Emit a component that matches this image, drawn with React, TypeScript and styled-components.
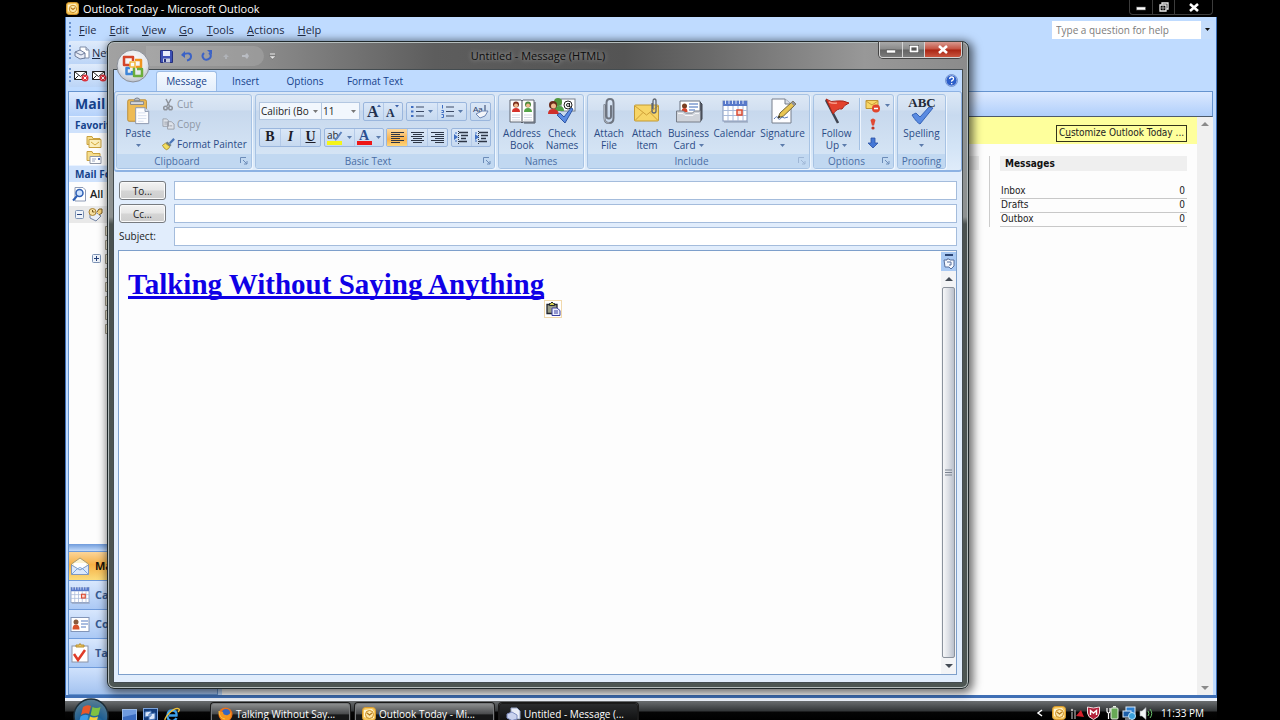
import React from 'react';
import styled, { createGlobalStyle, css } from 'styled-components';

const ui = '"Open Sans", "Noto Sans", sans-serif';
const tahoma = '"DejaVu Sans Condensed", "DejaVu Sans", sans-serif';

const Global = createGlobalStyle`
  * { box-sizing: border-box; }
  body { margin: 0; background: #000; font-family: ${ui}; font-size: 11px; line-height: 14px; color: #1e2b45; }
  button, input, select { font: inherit; color: inherit; margin: 0; padding: 0; }
  button { background: none; border: 0; white-space: nowrap; cursor: pointer; }
  svg { display: block; flex: none; }
  u { text-underline-offset: 1px; }
`;

/* ---------- desktop ---------- */
const Desktop = styled.div`
  position: relative;
  display: flex;
  flex-direction: column;
  height: 100vh;
  min-height: 480px;
  margin: 0 calc(5% - 1px) 0 calc(5% + 1px);
  overflow: hidden;
`;

const AppTitle = styled.header`
  display: flex;
  align-items: center;
  gap: 4px;
  height: 17px;
  padding-left: 1px;
  color: #fff;
  background: #000;
  h1 { margin: 0; flex: 1; font-size: 11px; font-weight: 400; }
`;

const AppButtons = styled.div`
  display: flex;
  height: 15px;
  align-self: flex-start;
  margin-right: 4px;
  border: 1px solid #3c3c3c;
  border-top: 0;
  border-radius: 0 0 4px 4px;
`;

const AppButton = styled.button<{ $wide?: boolean }>`
  display: grid;
  place-items: center;
  width: ${p => (p.$wide ? 38 : 22)}px;
  & + & { border-left: 1px solid #3c3c3c; }
`;

const AppFrame = styled.div`
  flex: 1;
  display: flex;
  flex-direction: column;
  min-height: 0;
  padding: 1px 3px 0 2px;
  background: #bfdbff;
  border: solid #3f6fb5;
  border-width: 0 1px 3px 1px;
`;

const Bar = styled.div`
  display: flex;
  align-items: center;
  height: 23px;
  gap: 4px;
`;

const Grip = styled.i`
  width: 2px;
  height: 15px;
  margin: 0 1px;
  background: repeating-linear-gradient(#6a93d0 0 2px, transparent 2px 4px);
`;

const Menu = styled.nav`
  display: flex;
  flex: 1;
  gap: 13px;
  padding-left: 3px;
`;

const HelpBox = styled.div`
  display: flex;
  height: 18px;
  input {
    width: 149px;
    padding: 0 4px;
    border: 0;
    font-size: 10px;
    background: #fff;
    &::placeholder { color: #7c7c7c; opacity: 1; }
  }
  button { width: 12px; display: grid; place-items: center; background: #c4dcfb; }
`;

const ToolStrip = styled(Bar)`
  gap: 2px;
  width: 40%;
  background: linear-gradient(#dfebfb, #bcd5f7);
  border-radius: 3px;
`;

const Panes = styled.div`
  flex: 1;
  display: flex;
  gap: 4px;
  min-height: 0;
  margin-top: 4px;
`;

/* ---------- navigation pane ---------- */
const NavPane = styled.aside`
  display: flex;
  flex-direction: column;
  width: 150px;
  border: 1px solid #6593cf;
  background: #fdfdfd;
  overflow: hidden;
  white-space: nowrap;
`;

const NavTitle = styled.h2`
  margin: 0;
  padding: 0 6px;
  font-size: 14px;
  line-height: 24px;
  color: #15428b;
  background: linear-gradient(#dfebff, #b5d2fb);
`;

const NavHead = styled.h3`
  margin: 0;
  padding: 0 6px;
  font-size: 10px;
  line-height: 16px;
  color: #15428b;
  background: #cfe2fc;
  border-top: 1px solid #e9f2ff;
`;

const NavRow = styled.div<{ $indent: number; $tone?: string; $h: number }>`
  display: flex;
  align-items: center;
  gap: 4px;
  height: ${p => p.$h}px;
  padding-left: ${p => p.$indent}px;
  font-weight: 600;
  color: #222;
  background: ${p => p.$tone || 'transparent'};
`;

const NavGrow = styled.div`
  flex: 1;
  min-height: 0;
  overflow: hidden;
`;

const TreeRow = styled.div`
  display: flex;
  justify-content: flex-end;
  align-items: center;
  gap: 4px;
  width: 50px;
  height: 14px;
`;

const NavButton = styled.button<{ $active?: boolean }>`
  display: flex;
  align-items: center;
  gap: 5px;
  height: 29px;
  padding-left: 1px;
  font-weight: 700;
  text-align: left;
  border-top: 1px solid #6f9bdb;
  color: ${p => (p.$active ? '#1a1208' : '#38598f')};
  background: ${p => (p.$active
    ? 'linear-gradient(#fbd59a, #f5b046 45%, #fbdc7c)'
    : 'linear-gradient(#d8e7fd, #abc9f5)')};
`;

const NavSplit = styled.div`
  height: 7px;
  background: linear-gradient(#6f9bdb, #c3dbfb);
`;

const NavFoot = styled.div`
  height: 27px;
  border-top: 1px solid #6f9bdb;
  background: linear-gradient(#cfe1fc, #a4c3f0);
`;

/* ---------- Outlook Today page ---------- */
const Today = styled.main`
  flex: 1;
  display: flex;
  flex-direction: column;
  min-width: 0;
`;

const TodayHead = styled.div`
  height: 26px;
  border: 1px solid #6593cf;
  border-bottom-color: #4d5a6b;
  background: linear-gradient(#dce9ff, #b0cffb);
`;

const TodayScroll = styled.div`
  flex: 1;
  display: flex;
  min-height: 0;
  background: #fdfdfd;
`;

const TodayPage = styled.div`
  flex: 1;
  font-family: ${tahoma};
  font-size: 10px;
  line-height: 12px;
  color: #222;
`;

const Yellow = styled.div`
  display: flex;
  justify-content: flex-end;
  align-items: center;
  height: 27px;
  padding: 5px 10px 0 0;
  background: #feff9c;
  margin-bottom: 12px;
`;

const Customize = styled.button`
  height: 17px;
  width: 131px;
  border: 1px solid #33331a;
`;

const Columns = styled.div`
  display: flex;
  justify-content: flex-end;
  gap: 10px;
  padding-right: 10px;
`;

const PastColumn = styled.div`
  flex: 1;
  height: 14px;
  background: #ececec;
`;

const Messages = styled.section`
  padding-left: 10px;
  border-left: 1px solid #ccc;
  h2 {
    margin: 0 0 13px;
    padding: 0 5px;
    font-size: 10px;
    line-height: 15px;
    color: #111;
    background: #efefef;
  }
  table { width: 187px; border-collapse: collapse; }
  th { text-align: left; font-weight: 400; }
  td { text-align: right; padding: 0 2px; }
  th, td { height: 14px; padding-top: 0; padding-bottom: 0; border-bottom: 1px solid #c8c8c8; }
`;

const PageScroll = styled.div`
  display: flex;
  flex-direction: column;
  justify-content: space-between;
  align-items: center;
  width: 16px;
  padding: 5px 0;
  background: #f0f0f0;
`;

/* ---------- message window ---------- */
const Win = styled.section`
  position: absolute;
  top: 41px;
  left: 42px;
  right: 248px;
  bottom: 31px;
  display: flex;
  flex-direction: column;
  padding: 0 5px 5px;
  border: 1px solid #20292b;
  border-radius: 7px;
  background: linear-gradient(90deg, #a2a2a2 0, #8b8b8b 18%, #5d5d5d 38%, #545454 60%, #6a6a6a 70%, #989898 88%, #8b8b8b) 0 0 / 100% 28px no-repeat,
    linear-gradient(#8d9191 0 175px, #4b5251 182px, #4d5653);
  box-shadow: inset 0 0 0 1px #b4bcbc, 2px 2px 10px 2px rgba(0, 0, 0, 0.6);
`;

const WinTitle = styled.header`
  display: grid;
  grid-template-columns: 1fr auto 1fr;
  height: 27px;
  h2 {
    margin: 0;
    font-size: 11px;
    font-weight: 400;
    line-height: 28px;
    color: #0c0c0c;
    text-shadow: 0 0 5px rgba(255, 255, 255, 0.6);
  }
`;

const QuickBar = styled.div`
  display: flex;
  align-items: center;
  align-self: center;
  justify-self: start;
  gap: 8px;
  height: 20px;
  margin-left: 33px;
  padding: 0 10px 0 14px;
  border-radius: 0 10px 10px 0;
  background: rgba(190, 190, 190, 0.3);
  & > button:last-child { margin: 0 -22px 0 10px; }
`;

const WinButtons = styled.div`
  display: flex;
  justify-self: end;
  height: 16px;
  margin-right: 1px;
  border: 1px solid #d4d4d4;
  border-top: 0;
  border-radius: 0 0 4px 4px;
  box-shadow: 0 0 0 1px #444;
  overflow: hidden;
`;

const WinButton = styled.button<{ $close?: boolean }>`
  display: grid;
  place-items: center;
  width: ${p => (p.$close ? 37 : 22)}px;
  background: ${p => (p.$close
    ? 'linear-gradient(#d89a90, #c4503f 48%, #a92412 52%, #c9553f)'
    : 'linear-gradient(#a9a9a9, #8a8a8a 48%, #636363 52%, #7b7b7b)')};
  & + & { border-left: 1px solid #d4d4d4; }
`;

const OfficeButton = styled.button`
  position: absolute;
  left: 8px;
  top: 7px;
`;

const Client = styled.div`
  flex: 1;
  display: flex;
  flex-direction: column;
  min-height: 0;
  border: 1px solid #444c50;
  background: #e1edfc;
`;

const Tabs = styled.nav`
  display: flex;
  align-items: flex-end;
  height: 21px;
  padding: 0 4px 0 42px;
  background: #bfdbff;
`;

const Tab = styled.button<{ $on?: boolean; $w: number }>`
  width: ${p => p.$w}px;
  height: 20px;
  padding-bottom: 2px;
  font-size: 10px;
  border: 1px solid transparent;
  border-bottom: 0;
  color: #15428b;
  ${p => p.$on && css`
    background: linear-gradient(#f6faff, #e3eefb);
    border-color: #9ebde6;
    border-radius: 3px 3px 0 0;
  `}
`;

const TabHelp = styled.button`
  margin: 0 0 4px auto;
`;

const Ribbon = styled.div`
  display: flex;
  gap: 3px;
  height: 81px;
  padding: 2px 1px 1px;
  border: 1px solid #8db2e3;
  border-width: 1px 1px 2px;
  border-radius: 3px;
  background: linear-gradient(#dce8f6, #c8daef 30%, #d3e4f6 70%, #dfecfa);
`;

const Group = styled.section<{ $w: number }>`
  display: flex;
  flex-direction: column;
  width: ${p => p.$w}px;
  border: 1px solid #a7c3e4;
  border-radius: 3px;
  box-shadow: 1px 1px 0 #eff6fe;
  background: linear-gradient(#dde8f5, #d2e0f1 20%, #c7d8ed 22%, #d9e8f7);
  overflow: hidden;
`;

const GroupBody = styled.div`
  flex: 1;
  display: flex;
  justify-content: center;
  min-height: 0;
`;

const GroupLabel = styled.footer`
  display: flex;
  align-items: center;
  height: 14px;
  padding: 0 3px;
  font-size: 10px;
  color: #4a6ea5;
  background: #c1d8f1;
  span { flex: 1; text-align: center; }
  button { margin-left: 6px; }
`;

const Big = styled.button<{ $w: number }>`
  display: flex;
  flex-direction: column;
  align-items: center;
  width: ${p => p.$w}px;
  padding-top: 2px;
  font-size: 10px;
  line-height: 12px;
  color: #2a4b86;
  svg + span { margin-top: 2px; }
  span { display: flex; flex-direction: column; align-items: center; }
`;

const Arrowed = styled.b`
  display: flex;
  align-items: center;
  gap: 3px;
  min-height: 12px;
  font-weight: 400;
`;

const ClipList = styled.div`
  flex: 1;
  display: flex;
  flex-direction: column;
  align-items: flex-start;
  gap: 6px;
  padding: 2px 0 0 3px;
`;

const ClipItem = styled.button`
  display: flex;
  align-items: center;
  gap: 2px;
  height: 14px;
  font-size: 10px;
  color: #2a4b86;
  &:disabled { color: #8e97a5; }
`;

const TextTools = styled.div`
  flex: 1;
  display: flex;
  flex-direction: column;
  gap: 7px;
  padding: 7px 3px 0;
`;

const ToolRow = styled.div`
  display: flex;
  justify-content: space-between;
`;

const Combos = styled.div`
  display: flex;
`;

const Combo = styled.label<{ $w: number }>`
  display: flex;
  align-items: center;
  width: ${p => p.$w}px;
  height: 18px;
  border: 1px solid #b3c7e1;
  background: #f2f7fd;
  & + & { border-left: 0; }
  select {
    flex: 1;
    min-width: 0;
    padding-left: 1px;
    border: 0;
    appearance: none;
    background: none;
    font-size: 10px;
    color: #222;
  }
  svg { margin-right: 3px; }
`;

const Cluster = styled.div`
  display: flex;
  height: 19px;
  border: 1px solid #9ab6dd;
  border-radius: 2px;
  background: linear-gradient(#dae7f7, #c6d9f0);
`;

const Tool = styled.button<{ $w: number; $on?: boolean; $serif?: boolean }>`
  display: flex;
  align-items: center;
  justify-content: center;
  gap: 4px;
  width: ${p => p.$w}px;
  & + & { border-left: 1px solid #b4cae8; }
  ${p => p.$on && css`background: linear-gradient(#fcd9a0, #f9b24c 60%, #fdd67c);`}
  ${p => p.$serif && css`
    padding-bottom: 2px;
    font: 700 14px/14px "Liberation Serif", serif;
    color: #1c1c28;
  `}
  em { font-weight: 700; }
`;

const OptionCol = styled.div`
  display: flex;
  flex-direction: column;
  justify-content: space-between;
  width: 34px;
  margin: 3px 0 4px;
  padding-left: 5px;
  border-left: 1px solid #a3c0e3;
  box-shadow: inset 1px 0 #edf4fd;
`;

const OptionBtn = styled.button`
  display: flex;
  align-items: center;
  gap: 4px;
  height: 15px;
`;

/* ---------- message form ---------- */
const Form = styled.div`
  display: grid;
  grid-template-columns: 47px 1fr;
  gap: 4px 8px;
  padding: 9px 5px 0;
`;

const Recipient = styled.button`
  height: 19px;
  font-size: 10px;
  border: 1px solid #777b80;
  border-radius: 3px;
  box-shadow: inset 0 0 0 1px #fafafa;
  background: linear-gradient(#f3f3f3, #e6e6e6 48%, #d5d5d5 52%, #cdcdcd);
  color: #222;
`;

const FormLabel = styled.label`
  font-size: 10px;
  line-height: 19px;
  color: #222;
`;

const Field = styled.input`
  width: 100%;
  height: 19px;
  border: 1px solid #a4bcdc;
  background: #fff;
  min-width: 0;
`;

const Editor = styled.div`
  flex: 1;
  display: flex;
  min-height: 0;
  margin: 4px 5px 7px 4px;
  border: 1px solid #7d9fcb;
  background: #fdfdfd;
`;

const Page = styled.article`
  flex: 1;
  padding: 17px 9px;
`;

const Headline = styled.div`
  position: relative;
  width: fit-content;
  a {
    font: 700 29px/32px "Liberation Serif", serif;
    color: #0f00e6;
    text-decoration-thickness: 3px;
    text-underline-offset: 2px;
    text-decoration-skip-ink: none;
  }
`;

const PasteTag = styled.button`
  position: absolute;
  left: 100%;
  top: 100%;
  display: grid;
  place-items: center;
  width: 18px;
  height: 18px;
  border: 1px solid #f1d9ac;
  background: #fff;
`;

const EditorScroll = styled.div`
  display: flex;
  flex-direction: column;
  align-items: center;
  width: 15px;
  padding-top: 1px;
  background: #f3f4f6;
`;

const RulerTag = styled.button`
  display: grid;
  place-items: center;
  width: 15px;
  height: 19px;
  background: #a9c9f3;
`;

const ScrollArrow = styled.button`
  display: grid;
  place-items: center;
  width: 15px;
  height: 16px;
`;

const Thumb = styled.div`
  flex: 1;
  display: grid;
  place-items: center;
  width: 13px;
  border: 1px solid #8b929c;
  border-radius: 2px;
  background: linear-gradient(90deg, #f6f7f9, #dcdfe5 50%, #b9c0cc);
`;

/* ---------- taskbar ---------- */
const Taskbar = styled.footer`
  position: relative;
  display: flex;
  align-items: flex-start;
  height: 22px;
  border-top: 3px solid #eef3fb;
  background: linear-gradient(#6b6e70, #35383a 50%, #050505 60%, #000);
  color: #fff;
`;

const Orb = styled.button`
  position: absolute;
  left: 8px;
  top: -3px;
`;

const Quick = styled.div`
  display: flex;
  gap: 6px;
  height: 28px;
  align-items: center;
  width: 146px;
  padding-left: 57px;
  flex: none;
`;

const Tasks = styled.div`
  display: flex;
  gap: 5px;
  flex: 1;
  padding-top: 2px;
`;

const Task = styled.button<{ $on?: boolean }>`
  display: flex;
  align-items: center;
  gap: 3px;
  width: 139px;
  height: 22px;
  padding-left: 6px;
  border: 1px solid ${p => (p.$on ? '#1c1c1c' : '#77797b')};
  border-radius: 3px;
  background: ${p => (p.$on
    ? 'linear-gradient(#2a2c2e, #0b0b0b)'
    : 'linear-gradient(#8b8d8e, #4b4d4f 48%, #161718 55%)')};
  box-shadow: 0 0 0 1px #1a1a1a;
  font-size: 10px;
`;

const Tray = styled.div`
  display: flex;
  align-items: center;
  gap: 3px;
  height: 24px;
  padding-right: 13px;
  time { margin-left: 5px; font-size: 10px; }
`;

/* ---------- glyphs ---------- */
const Down = ({ c = '#5b7bab', s = 5 }: { c?: string; s?: number }) => (
  <svg width={s} height="3" viewBox="0 0 5 3"><path d="M0 0h5L2.500 3z" fill={c} /></svg>
);

const ScrollTri = ({ up, c = '#444b55', w = 8 }: { up?: boolean; c?: string; w?: number }) => (
  <svg width={w} height="4" viewBox="0 0 8 4"><path d={up ? 'M0 4h8L4 0z' : 'M0 0h8L4 4z'} fill={c} /></svg>
);

const Launcher = ({ label, dim }: { label: string; dim?: boolean }) => (
  <button aria-label={label}>
    <svg width="8" height="8" viewBox="0 0 8 8" stroke={dim ? '#9fb7d6' : '#6c8cb8'} fill="none">
      <path d="M.5 6V.5H6M3 3l4 4M7 4v3H4" />
    </svg>
  </button>
);

const OutlookLogo = ({ s = 13 }: { s?: number }) => (
  <svg width={s} height={s} viewBox="0 0 14 14">
    <rect x=".5" y=".5" width="13" height="13" rx="3" fill="#f6c75c" stroke="#d99a2b" />
    <path d="M2 3l8-1 2 3v6l-3 1-7-2z" fill="#fff3cf" />
    <circle cx="7.500" cy="7.500" r="4" fill="#fbe6a8" stroke="#c98a1d" />
    <path d="M5 6l2.500 2L10 6" stroke="#b4751a" fill="none" strokeWidth="1.200" />
  </svg>
);

const Folder = () => (
  <svg width="16" height="15" viewBox="0 0 16 15">
    <path d="M1 2.500h5l1 2h7v6H1z" fill="#f5dd8c" stroke="#c9a13f" />
    <path d="M3 5.500h12v8H3z" fill="#fbeebb" stroke="#c9a13f" />
    <path d="M5 8l4 3 4-3" stroke="#d3aa3e" fill="none" />
  </svg>
);

const SentFolder = () => (
  <svg width="16" height="15" viewBox="0 0 16 15">
    <path d="M1 1.500h5l1 2h7v7H1z" fill="#f5dd8c" stroke="#c9a13f" />
    <path d="M4 6.500h11v7H4z" fill="#fff" stroke="#8f97a8" />
    <path d="M12 8h2v2h-2z" fill="#4b6fc0" /><path d="M6 9h4M6 11h3" stroke="#9aa5bd" />
  </svg>
);

const TreeFolder = () => (
  <svg width="14" height="11" viewBox="0 0 14 11">
    <path d="M.5 1.500h5l1 2h7v7H.5z" fill="#f3edd6" stroke="#9c9788" />
  </svg>
);

const SearchPage = () => (
  <svg width="14" height="15" viewBox="0 0 14 15">
    <path d="M3 .5h8l2.500 2.500v11H3z" fill="#fff" stroke="#8e9bb5" />
    <circle cx="7.500" cy="6" r="3.500" fill="#cfe4ff" stroke="#2e5fb4" strokeWidth="1.500" />
    <path d="M5 9l-4 4.500" stroke="#2e5fb4" strokeWidth="2" />
  </svg>
);

const Expander = ({ plus }: { plus?: boolean }) => (
  <svg width="9" height="9" viewBox="0 0 9 9">
    <rect x=".5" y=".5" width="8" height="8" rx="1" fill="#eef3fa" stroke="#7d93b5" />
    <path d={plus ? 'M2 4.500h5M4.500 2v5' : 'M2 4.500h5'} stroke="#26417a" />
  </svg>
);

const Mailbox = () => (
  <svg width="15" height="14" viewBox="0 0 15 14">
    <path d="M2 4l7 1 4 3-5 5-6-3z" fill="#e9eef7" stroke="#7484a3" />
    <circle cx="4.500" cy="4" r="3.500" fill="#f6dfa0" stroke="#a98232" />
    <path d="M4.500 2v2h2M9 4l2-3h3v4l-3 2" stroke="#7b5b1e" fill="#f7d27a" />
  </svg>
);

const NewMail = () => (
  <svg width="16" height="14" viewBox="0 0 16 14">
    <path d="M6 1h6l3 3v8H6z" fill="#fff" stroke="#7f8da8" />
    <path d="M12 1v3h3" fill="#d5dcea" stroke="#7f8da8" />
    <path d="M1 6l5-2 5 3v5l-5 1-5-3z" fill="#e6ebf6" stroke="#6f7d9c" />
    <path d="M1 6l6 3 4-2" stroke="#6f7d9c" fill="none" />
  </svg>
);

const MailStrike = () => (
  <svg width="16" height="13" viewBox="0 0 16 13">
    <path d="M.5 2.500h12v8H.5z" fill="#fff" stroke="#222" />
    <path d="M.5 2.500l6 5 6-5M.5 10.500l4-4M12.500 10.500l-4-4" stroke="#222" fill="none" />
    <circle cx="11" cy="9" r="3.500" fill="#d9323c" />
    <path d="M9.500 7.500l3 3M12.500 7.500l-3 3" stroke="#fff" />
  </svg>
);

const NavMail = () => (
  <svg width="20" height="19" viewBox="0 0 20 19">
    <path d="M1.500 7L10 1l8.500 6v10.500h-17z" fill="#fdf3d2" stroke="#a99a70" />
    <path d="M4 6h12v6H4z" fill="#fff" />
    <path d="M1.500 8l8.500 5 8.500-5v9.500h-17z" fill="#dbe8fb" stroke="#8098bf" />
    <path d="M2 17l5-5q3-3 6 0l5 5" stroke="#7aa5de" fill="none" />
  </svg>
);

const CalendarIcon = ({ w = 20, h = 18 }: { w?: number; h?: number }) => (
  <svg width={w} height={h} viewBox="0 0 26 24">
    <rect x="1" y="2" width="24" height="20" fill="#fff" stroke="#8295b8" />
    <path d="M1 2h24v5H1z" fill="#5879c9" />
    <path d="M3.500 0v5M7 0v5M10.500 0v5M14 0v5M17.500 0v5M21 0v5" stroke="#dde8fb" />
    <path d="M1 11.500h24M1 16.500h24M6 7v15M11 7v15M16 7v15M21 7v15" stroke="#a9bad9" />
    <rect x="15" y="11" width="5" height="5" fill="#fbd4c9" stroke="#db4b32" strokeWidth="1.500" />
    <path d="M2 23h24" stroke="#8f9ab0" />
  </svg>
);

const ContactIcon = () => (
  <svg width="20" height="17" viewBox="0 0 20 17">
    <rect x="1" y="1.500" width="18" height="14" fill="#fff" stroke="#8295b8" />
    <circle cx="6" cy="6" r="2.500" fill="#8a5a3c" />
    <path d="M2.500 13.500q0-5 3.500-5t3.500 5z" fill="#d8532c" />
    <path d="M11 5h7M11 8h7M11 11h5" stroke="#8fa8d6" strokeWidth="1.500" />
  </svg>
);

const TaskIcon = () => (
  <svg width="20" height="20" viewBox="0 0 20 20">
    <rect x="2" y="3" width="16" height="16" fill="#fff" stroke="#8c94a6" />
    <path d="M6 4V2h3l1-1.500L11 2h3v2z" fill="#ecc35a" stroke="#b78f33" />
    <path d="M4 11l4 6 7-10" stroke="#e03c28" strokeWidth="2.500" fill="none" />
  </svg>
);

const OfficeLogo = () => (
  <svg width="34" height="34" viewBox="0 0 34 34">
    <defs>
      <radialGradient id="orbFace" cx=".5" cy=".35" r=".7">
        <stop offset="0" stopColor="#fff" /><stop offset=".6" stopColor="#e6e8ec" /><stop offset="1" stopColor="#b3bac6" />
      </radialGradient>
    </defs>
    <circle cx="17" cy="17" r="16" fill="url(#orbFace)" stroke="#8b8f98" />
    <g fill="none" strokeWidth="2.500" strokeLinejoin="round">
      <path d="M14 16H8V8h9v4" stroke="#d4452a" />
      <path d="M19 11h6v7h-5" stroke="#f0941e" />
      <path d="M14 19h-3.500v6H16v-3" stroke="#3f86d8" />
      <path d="M18 18v9h8v-7h-5" stroke="#6cae3c" />
      <path d="M14 13h5v5h-5z" stroke="#f3b73a" strokeWidth="1.500" />
    </g>
  </svg>
);

const Save = () => (
  <svg width="13" height="13" viewBox="0 0 13 13">
    <path d="M.5.500h11l1 1v11H.500z" fill="#3e50b4" stroke="#26307c" />
    <path d="M3 1h7v5H3z" fill="#e8ecfa" /><path d="M3 8.500h7v4H3z" fill="#c9cfe2" /><path d="M4 9h2v3H4z" fill="#26307c" />
  </svg>
);

const Undo = () => (
  <svg width="12" height="12" viewBox="0 0 12 12">
    <path d="M2 4.500q8-3 8 2 0 3-4 4" stroke="#3b62c6" strokeWidth="2" fill="none" />
    <path d="M0 5l4-4v7z" fill="#3b62c6" />
  </svg>
);

const Redo = () => (
  <svg width="12" height="12" viewBox="0 0 12 12">
    <path d="M3 3q-3 3 0 6 3 2 6-1 2-3-1-5" stroke="#3b62c6" strokeWidth="2" fill="none" />
    <path d="M6 0h5v5z" fill="#3b62c6" />
  </svg>
);

const FaintArrow = ({ flip }: { flip?: boolean }) => (
  <svg width="11" height="10" viewBox="0 0 11 10">
    <path d={flip ? 'M2 4h3l2-2 2 3-2 3-2-2H2z' : 'M2 6l3-3 3 3H6v2H4V6z'} fill={flip ? '#b9bcc2' : '#b0b3b8'} />
  </svg>
);

const Customise = () => (
  <svg width="7" height="7" viewBox="0 0 7 7"><path d="M1 1h5" stroke="#e8e8e8" /><path d="M0 3h7L3.500 6z" fill="#e8e8e8" stroke="#555" strokeWidth=".4" /></svg>
);

const HelpIcon = () => (
  <svg width="13" height="13" viewBox="0 0 13 13">
    <circle cx="6.500" cy="6.500" r="5.700" fill="#2c5ec9" stroke="#dfeaff" />
    <circle cx="6.500" cy="6.500" r="6" fill="none" stroke="#5b80c4" strokeWidth=".8" />
    <path d="M4.700 5q0-2 2-2t1.800 2q0 1-1.800 1.800v1M6.700 9v1.200" stroke="#fff" strokeWidth="1.300" fill="none" />
  </svg>
);

const PasteIcon = () => (
  <svg width="26" height="28" viewBox="0 0 26 30">
    <rect x="2" y="3" width="20" height="23" rx="1.500" fill="#eebb55" stroke="#b98a34" />
    <path d="M5 5h14v3H5z" fill="#d8dbe2" stroke="#7d828c" />
    <path d="M9 4q0-3 3-3t3 3z" fill="#b9bec8" stroke="#7d828c" />
    <path d="M10.500 11.500h10l4 4v13h-14z" fill="#fdfdff" stroke="#8994ab" />
    <path d="M20.500 11.500v4h4" fill="#dbe3f2" stroke="#8994ab" />
    <path d="M13 17h8M13 20h9M13 23h9M13 26h6" stroke="#d5deee" />
  </svg>
);

const Scissors = () => (
  <svg width="13" height="13" viewBox="0 0 13 13" fill="none" stroke="#8f949c">
    <path d="M4 1l3.500 7M9 1L5 8" strokeWidth="1.500" /><circle cx="3.500" cy="10" r="1.800" strokeWidth="1.500" /><circle cx="8.500" cy="10" r="1.800" strokeWidth="1.500" />
  </svg>
);

const CopyIcon = () => (
  <svg width="13" height="12" viewBox="0 0 14 12" fill="#dde2ea" stroke="#9aa0aa">
    <path d="M1 .5h4l2 2v6H1zM6 3.500h4l3 2.500v5.500H6z" /><path d="M2.500 4h3M2.500 6h3M8 8h3" />
  </svg>
);

const Brush = () => (
  <svg width="13" height="13" viewBox="0 0 15 13">
    <path d="M14 0L9 5" stroke="#4a76b8" strokeWidth="2.500" />
    <path d="M6 3l5 4-2 2-5-4z" fill="#6b7f8c" /><path d="M4 5l5 4q-1 3-4 3.500Q2 11 .5 7.500z" fill="#f2dd5e" stroke="#a88d28" />
  </svg>
);

const Bullets = ({ numbered }: { numbered?: boolean }) => (
  <svg width="13" height="13" viewBox="0 0 13 13">
    <path d="M5 2h8M5 6.500h8M5 11h8" stroke="#3c4a66" />
    {numbered
      ? <path d="M1.500 0v3.500M.5 5.500h2v2h-2M.5 9.500h2v3h-2" stroke="#3f6ec2" fill="none" />
      : <path d="M0 1h2.500v2H0zM0 5.500h2.500v2H0zM0 10h2.500v2H0z" fill="#3f6ec2" />}
  </svg>
);

const Align = ({ x, w }: { x: number; w: number }) => (
  <svg width="13" height="11" viewBox="0 0 13 11">
    {[0, 1, 2, 3, 4, 5].map(i => (
      <rect key={i} x={i % 2 ? x : 0} y={i * 2} width={i % 2 ? w : 13} height="1" fill="#2d3646" />
    ))}
  </svg>
);

const Indent = ({ out }: { out?: boolean }) => (
  <svg width="14" height="13" viewBox="0 0 14 13">
    <path d="M5 1.500h9M7 4.500h7M7 7.500h5M5 10.500h8" stroke="#2d3646" strokeWidth="1.500" />
    <path d="M4.500 0v13" stroke="#2d3646" strokeDasharray="1 1" />
    <path d={out ? 'M4 6L0 3v6z' : 'M0 6h2M1 3l4 3-4 3z'} fill="#3f6ec2" /><path d="M1 2h2M1 10h2" stroke="#3f6ec2" />
  </svg>
);

const Highlighter = () => (
  <svg width="16" height="15" viewBox="0 0 16 15">
    <rect x="0" y="11" width="15" height="4" fill="#f4f41a" />
    <text x="0" y="9" fontFamily="Open Sans, sans-serif" fontSize="10" fill="#2a2a2a">ab</text>
    <path d="M14.500 2L10 8l-2 2" stroke="#5d83be" strokeWidth="2" fill="none" />
  </svg>
);

const Grow = ({ s, up }: { s: number; up?: boolean }) => (
  <svg width="16" height="15" viewBox="0 0 16 15">
    <text x="1" y="13" fontFamily="Liberation Serif, serif" fontWeight="700" fontSize={s} fill="#22314f">A</text>
    <path d={up ? 'M11 3h4l-2-2.500z' : 'M10 1h4l-2 2.500z'} fill="#3a5fa8" />
  </svg>
);

const FontColour = () => (
  <svg width="15" height="15" viewBox="0 0 15 15">
    <text x="2" y="10" fontFamily="Liberation Serif, serif" fontWeight="700" fontSize="14" fill="#2c4f91">A</text>
    <rect x="0" y="11" width="15" height="4" fill="#ee1616" />
  </svg>
);

const ClearFormat = () => (
  <svg width="17" height="15" viewBox="0 0 17 15">
    <text x="1" y="8" fontFamily="Liberation Sans, sans-serif" fontSize="8" fill="#2c3e66">Aa</text>
    <path d="M13 1v6" stroke="#2c3e66" /><path d="M4 10l6-3 6 0-3 5-5 2z" fill="#f3f5fa" stroke="#6d86b3" />
  </svg>
);

const AddressBook = () => (
  <svg width="28" height="28" viewBox="0 0 28 28">
    <path d="M2 3h11l1 1 1-1h11v22H15l-1 1-1-1H2z" fill="#fff" stroke="#5e6570" />
    <path d="M14 4v22M27 5v21H16" stroke="#4a4f58" fill="none" />
    <circle cx="8" cy="7.500" r="3" fill="#7b2d1c" /><circle cx="8" cy="8.500" r="2" fill="#f1b98c" /><path d="M4 15q0-4 4-4t4 4z" fill="#d6322a" />
    <circle cx="20" cy="7.500" r="3" fill="#4f8a3a" /><circle cx="20" cy="8.500" r="2" fill="#f1b98c" /><path d="M16 15q0-4 4-4t4 4z" fill="#55a548" />
    <path d="M4 18h8M4 20.500h8M4 23h8M16 18h8M16 20.500h8M16 23h8" stroke="#d3d8e2" />
  </svg>
);

const CheckNames = () => (
  <svg width="30" height="28" viewBox="0 0 30 28">
    <rect x="14" y="2" width="14" height="12" fill="#fff" stroke="#777e8a" />
    <circle cx="21" cy="8" r="4" fill="none" stroke="#222" /><circle cx="21" cy="8" r="1.500" fill="none" stroke="#222" /><path d="M22.500 6v4h2" stroke="#222" fill="none" />
    <circle cx="11" cy="5" r="4" fill="#52963c" /><path d="M7 14q0-5 5-5t5 5z" fill="#52a348" />
    <circle cx="6" cy="8" r="4" fill="#6b2a1a" /><circle cx="6.500" cy="9" r="2.500" fill="#f1b98c" /><path d="M1 17q0-5 5-5t6 5z" fill="#cf2f2a" />
    <path d="M10 18l3-2 4 4 7-9 2 1-8 14z" fill="#5a8be2" stroke="#2c54a4" />
  </svg>
);

const Clip = () => (
  <svg width="14" height="28" viewBox="0 0 14 28" fill="none" strokeLinecap="round">
    <path d="M2.500 8v13q0 5 4.500 5t4.500-5V6q0-4-3.500-4T4.500 6v13q0 2.500 2.300 2.500T9 19V9" stroke="#6e7581" strokeWidth="2" />
    <path d="M2.500 8v13q0 5 4.500 5" stroke="#aeb4be" />
  </svg>
);

const AttachItem = () => (
  <svg width="28" height="28" viewBox="0 0 28 28">
    <rect x="1.500" y="8" width="24" height="16" rx="1" fill="#f7d566" stroke="#c29a35" />
    <path d="M2 9l11.500 9L25 9M2 23.500l8-8M25 23.500l-8-8" stroke="#cf9f36" fill="none" />
    <path d="M19 6v8q0 2 2 2t2-2V4q0-2-1.500-2T20 4v8" stroke="#5e6570" fill="none" strokeWidth="1.300" />
  </svg>
);

const BusinessCard = () => (
  <svg width="28" height="28" viewBox="0 0 28 28">
    <path d="M5 4h20v16H5z" fill="#fff" stroke="#6b7280" />
    <circle cx="9.500" cy="9" r="2.500" fill="#7b3f22" /><path d="M6.500 15q0-4 3-4t3 4z" fill="#d6432a" />
    <path d="M14 7h9M14 10h9M14 13h6" stroke="#7d9bd0" strokeWidth="1.500" />
    <path d="M25 5l2 2v15l-2 3" fill="#555b66" stroke="#3e434c" />
    <path d="M1.500 14h7l2 2h7l2-2h6v11h-24z" fill="#cfd3da" stroke="#777d88" />
    <path d="M3 16.500h5l2 2h8l2-2h4" stroke="#f5f6f8" fill="none" />
  </svg>
);

const SignatureIcon = () => (
  <svg width="28" height="28" viewBox="0 0 28 28">
    <path d="M3 2h13l6 5v19H3z" fill="#fdfdff" stroke="#777e8c" />
    <path d="M16 2v5h6" fill="#d7dce6" stroke="#777e8c" />
    <path d="M5 22q3-4 4-1t4-1q2 2 6 0" stroke="#5677b8" fill="none" />
    <path d="M9 21l2-5L24 4l3 3-12.500 12z" fill="#e9c552" stroke="#6f6338" />
    <path d="M22 6l3 3 2-2-3-3z" fill="#8d9097" /><path d="M9 21l1-2.500 1.500 1.500z" fill="#222" />
  </svg>
);

const Flag = () => (
  <svg width="28" height="28" viewBox="0 0 28 28">
    <path d="M3 3l12 23" stroke="#3f4450" strokeWidth="2.500" />
    <path d="M3 2q5 4 11 2 6-1 12 2-5 2-7 6-5-1-9 5z" fill="#e2412d" stroke="#a82518" />
    <path d="M6 5q4 2 8 1" stroke="#f79a86" fill="none" strokeWidth="1.500" />
  </svg>
);

const SpellIcon = () => (
  <svg width="30" height="28" viewBox="0 0 30 28">
    <path d="M5 18l4-2 4 4 9-10 4 1-13 16q-3-1-8-9z" fill="#5a8be2" stroke="#3563b5" />
    <text x="15" y="10" textAnchor="middle" fontFamily="Liberation Serif, serif" fontWeight="700" fontSize="13" fill="#222a38">ABC</text>
  </svg>
);

const Permission = () => (
  <svg width="16" height="14" viewBox="0 0 16 14">
    <path d="M1 1.500h12v8H1z" fill="#f8d766" stroke="#bd9434" /><path d="M1 2l6 4 6-4" stroke="#c89b35" fill="none" />
    <circle cx="11" cy="9.500" r="4" fill="#e0452d" /><path d="M9 9.500h4" stroke="#fff" strokeWidth="1.500" />
  </svg>
);

const High = () => (
  <svg width="16" height="12" viewBox="0 0 16 12"><path d="M5.500 2q2.500-3 5 0L9 7.500H7z" fill="#e04a34" /><circle cx="8" cy="10" r="1.600" fill="#c23522" /></svg>
);

const Low = () => (
  <svg width="16" height="12" viewBox="0 0 16 12"><path d="M6 1h4v5h3l-5 5-5-5h3z" fill="#4477d6" stroke="#2b52a3" strokeWidth=".8" /></svg>
);

const PasteSmall = () => (
  <svg width="15" height="14" viewBox="0 0 15 14">
    <path d="M1 2.500h10v9H1z" fill="#9a9d86" stroke="#22262e" strokeWidth="1.300" /><path d="M3.500 3.500v-2h1L6 0l1.500 1.500h1v2z" fill="#d4cf4a" stroke="#22262e" />
    <path d="M6 6h5l3 2.500v5H6z" fill="#eceeff" stroke="#3b3f9c" /><path d="M8 9h4M8 11h4" stroke="#3b3f9c" />
  </svg>
);

const Ruler = () => (
  <svg width="12" height="17" viewBox="0 0 12 17">
    <path d="M2 2h8" stroke="#2c4676" strokeWidth="2" />
    <path d="M1 7h3v-1h2l1 1h4v6l-3 3-2-2H2z" fill="#f5f8fd" stroke="#566f9c" /><path d="M4 9h4v3H6" stroke="#566f9c" fill="none" />
  </svg>
);

const StartOrb = () => (
  <svg width="36" height="36" viewBox="0 0 36 36">
    <defs>
      <radialGradient id="startFace" cx=".5" cy=".9" r=".9">
        <stop offset="0" stopColor="#3fd0f5" /><stop offset=".5" stopColor="#1d5d92" /><stop offset="1" stopColor="#5c7f92" />
      </radialGradient>
    </defs>
    <circle cx="18" cy="18" r="17" fill="url(#startFace)" stroke="#1c2c36" strokeWidth="1.500" />
    <path d="M10 9q4-3 8-1l-2 8q-4-2-8 1z" fill="#e8572a" /><path d="M19.500 9q4 2 8 0l-2 8q-4 2-8 0z" fill="#7fc242" />
    <path d="M7.500 18.500q4-3 8-1l-2 8q-4-2-8 1z" fill="#3b9be8" /><path d="M17 18.500q4 2 8 0l-2 8q-4 2-8 0z" fill="#f8cc3a" />
  </svg>
);

const ShowDesktop = () => (
  <svg width="15" height="13" viewBox="0 0 15 13"><rect x=".5" y=".5" width="14" height="11" fill="#3a6cc0" stroke="#9dbbe6" /><path d="M1 1h13v4L1 8z" fill="#6f9be0" /></svg>
);

const SwitchWin = () => (
  <svg width="15" height="14" viewBox="0 0 15 14"><rect x=".5" y=".5" width="14" height="13" fill="#123c7c" stroke="#7ea4da" /><path d="M2 4l6-1v5l-6 1zM6 6l6-1v6l-6 1z" fill="#dbe8fb" stroke="#4676b8" /></svg>
);

const IE = () => (
  <svg width="16" height="16" viewBox="0 0 16 16"><path d="M12.500 11q-2 3.500-5 3Q3 13 3.500 8T8.500 3.500Q13 4 12.500 8.500H5" stroke="#3ea3ec" strokeWidth="2.300" fill="none" /><path d="M1 14Q0 11 6 5.500T15 2q1 1-1 3" stroke="#f0c23a" fill="none" strokeWidth="1.300" /></svg>
);

const Firefox = () => (
  <svg width="15" height="15" viewBox="0 0 15 15"><circle cx="7.500" cy="7.500" r="7" fill="#e8701a" /><circle cx="8" cy="6" r="4" fill="#3566c0" /><path d="M1 4q2 1 4 1 0 3 3 3 3 1 5-3 1 8-5 9Q1 13 1 4z" fill="#f6951e" /><path d="M1 4q0 7 6 8" stroke="#fbc540" fill="none" /></svg>
);

const People = () => (
  <svg width="15" height="14" viewBox="0 0 15 14"><path d="M5 1h6l3 3v8H5z" fill="#e9edf7" stroke="#96a4c6" /><path d="M1 7l5-2 5 3v4l-5 1.500L1 11z" fill="#c9d2ee" stroke="#7f8ec0" /></svg>
);

const Shield = () => (
  <svg width="13" height="14" viewBox="0 0 13 14"><path d="M.5 1L6.500 2l6-1v6q0 4-6 6.500Q.5 11 .5 7z" fill="#b3213a" stroke="#f0dce0" /><path d="M3.500 9V4.500l3 2.500 3-2.500V9" stroke="#fff" fill="none" strokeWidth="1.400" /></svg>
);

const Antenna = () => (
  <svg width="15" height="13" viewBox="0 0 15 13"><path d="M3 5v7M6 3v9" stroke="#8a8a8a" strokeWidth="1.500" /><path d="M7 9l5-6 3 7z" fill="#d61f2b" /><circle cx="3" cy="3" r="1.200" fill="#bbb" /></svg>
);

const Battery = () => (
  <svg width="13" height="14" viewBox="0 0 13 14"><rect x="5" y="2" width="7" height="11" rx="1" fill="#67a955" stroke="#e8f3e4" /><path d="M7 .500h3" stroke="#e8f3e4" strokeWidth="2" /><path d="M1 2v3q0 2 1.500 2T4 5V2M2.500 7v6" stroke="#fff" fill="none" strokeWidth="1.200" /></svg>
);

const Network = () => (
  <svg width="14" height="14" viewBox="0 0 14 14"><rect x="4" y="1" width="9" height="7" fill="#2b7fd0" stroke="#dcebfb" /><rect x="1" y="5" width="8" height="6" fill="#1c5ea8" stroke="#dcebfb" /><circle cx="10" cy="10" r="3.500" fill="#3aa0dc" stroke="#bfe3fa" /><path d="M3 13h5" stroke="#dcebfb" /></svg>
);

const Speaker = () => (
  <svg width="14" height="13" viewBox="0 0 14 13"><path d="M1 4h2l4-3.500v12L3 9H1z" fill="#f3f5f7" stroke="#9da3a8" strokeWidth=".6" /><path d="M9 4q2 2.500 0 5M11 2q3.500 4.500 0 9" stroke="#6cc66e" fill="none" /></svg>
);

const MinGlyph = () => <svg width="10" height="8" viewBox="0 0 10 8"><rect x=".5" y="4" width="9" height="3" fill="#fff" stroke="#555" strokeWidth=".6" /></svg>;
const MaxGlyph = () => <svg width="10" height="9" viewBox="0 0 10 9"><rect x="1.500" y="1.500" width="7" height="5" fill="none" stroke="#444" strokeWidth="3" /><rect x="1.500" y="1.500" width="7" height="5" fill="#555" stroke="#fff" strokeWidth="1.800" /></svg>;
const RestoreGlyph = () => <svg width="10" height="10" viewBox="0 0 10 10" fill="none" stroke="#eee" strokeWidth="1.300"><path d="M3 2.500V1h6v6H7.500" /><path d="M1 3h6v6H1z" /><path d="M3 5h2v2H3z" strokeWidth=".6" /></svg>;
const CloseGlyph = () => <svg width="10" height="9" viewBox="0 0 10 9"><path d="M1 1l8 7M9 1L1 8" stroke="#fff" strokeWidth="2.600" /></svg>;

const menus = ['File', 'Edit', 'View', 'Go', 'Tools', 'Actions', 'Help'];
const counts: [string, number][] = [['Inbox', 0], ['Drafts', 0], ['Outbox', 0]];
const treeRows = [false, false, true, false, false, false, false, false];

const BigTool = ({ icon, lines, w, arrow, inline }: { icon: React.ReactNode; lines: string[]; w: number; arrow?: boolean; inline?: boolean }) => (
  <Big $w={w}>
    {icon}
    <span>
      {lines.map((t, i) => (
        <Arrowed key={t}>{t}{inline && i === lines.length - 1 && <Down />}</Arrowed>
      ))}
      {arrow && <Arrowed><Down /></Arrowed>}
    </span>
  </Big>
);

function OutlookToday() {
  return (
    <>
      <AppTitle>
        <OutlookLogo />
        <h1>Outlook Today - Microsoft Outlook</h1>
        <AppButtons>
          <AppButton aria-label="Minimize Outlook"><MinGlyph /></AppButton>
          <AppButton aria-label="Restore Outlook"><RestoreGlyph /></AppButton>
          <AppButton $wide aria-label="Close Outlook"><CloseGlyph /></AppButton>
        </AppButtons>
      </AppTitle>
      <AppFrame>
        <Bar>
          <Grip />
          <Menu>
            {menus.map(m => <button key={m}><u>{m[0]}</u>{m.slice(1)}</button>)}
          </Menu>
          <HelpBox>
            <input aria-label="Help question" placeholder="Type a question for help" />
            <button aria-label="Recent questions"><Down c="#111" /></button>
          </HelpBox>
        </Bar>
        <ToolStrip><Grip /><NewMail /><button><u>N</u>ew</button></ToolStrip>
        <ToolStrip><Grip /><MailStrike /><MailStrike /></ToolStrip>
        <Panes>
          <NavPane>
            <NavTitle>Mail</NavTitle>
            <NavHead>Favorite Folders</NavHead>
            <NavRow $indent={17} $h={16}><Folder /></NavRow>
            <NavRow $indent={17} $h={16}><SentFolder /></NavRow>
            <NavHead>Mail Folders</NavHead>
            <NavRow $indent={3} $h={24}><SearchPage />All Mail Items</NavRow>
            <NavGrow>
              <NavRow $indent={6} $h={17} $tone="#e9e9e9"><Expander /><Mailbox /></NavRow>
              {treeRows.map((plus, i) => (
                <TreeRow key={i}>{plus && <Expander plus />}<TreeFolder /></TreeRow>
              ))}
            </NavGrow>
            <NavSplit />
            <NavButton $active><NavMail />Mail</NavButton>
            <NavButton><CalendarIcon />Calendar</NavButton>
            <NavButton><ContactIcon />Contacts</NavButton>
            <NavButton><TaskIcon />Tasks</NavButton>
            <NavFoot />
          </NavPane>
          <Today>
            <TodayHead />
            <TodayScroll>
              <TodayPage>
                <Yellow><Customize>C<u>u</u>stomize Outlook Today ...</Customize></Yellow>
                <Columns>
                  <PastColumn />
                  <Messages>
                    <h2>Messages</h2>
                    <table>
                      <tbody>
                        {counts.map(([name, n]) => (
                          <tr key={name}><th scope="row">{name}</th><td>{n}</td></tr>
                        ))}
                      </tbody>
                    </table>
                  </Messages>
                </Columns>
              </TodayPage>
              <PageScroll><ScrollTri up c="#8a8a8a" /><ScrollTri c="#8a8a8a" /></PageScroll>
            </TodayScroll>
          </Today>
        </Panes>
      </AppFrame>
    </>
  );
}

function MessageWindow() {
  return (
    <Win>
      <WinTitle>
        <QuickBar>
          <button aria-label="Save"><Save /></button>
          <button aria-label="Undo"><Undo /></button>
          <button aria-label="Redo"><Redo /></button>
          <button aria-label="Previous Item"><FaintArrow /></button>
          <button aria-label="Next Item"><FaintArrow flip /></button>
          <button aria-label="Customize Quick Access Toolbar"><Customise /></button>
        </QuickBar>
        <h2>Untitled - Message (HTML)</h2>
        <WinButtons>
          <WinButton aria-label="Minimize"><MinGlyph /></WinButton>
          <WinButton aria-label="Maximize"><MaxGlyph /></WinButton>
          <WinButton $close aria-label="Close"><CloseGlyph /></WinButton>
        </WinButtons>
      </WinTitle>
      <Client>
        <Tabs>
          <Tab $on $w={61}>Message</Tab>
          <Tab $w={57}>Insert</Tab>
          <Tab $w={62}>Options</Tab>
          <Tab $w={78}>Format Text</Tab>
          <TabHelp aria-label="Help"><HelpIcon /></TabHelp>
        </Tabs>
        <Ribbon>
          <Group $w={136}>
            <GroupBody>
              <BigTool icon={<PasteIcon />} lines={['Paste']} w={42} arrow />
              <ClipList>
                <ClipItem disabled><Scissors />Cut</ClipItem>
                <ClipItem disabled><CopyIcon />Copy</ClipItem>
                <ClipItem><Brush />Format Painter</ClipItem>
              </ClipList>
            </GroupBody>
            <GroupLabel><span>Clipboard</span><Launcher label="Clipboard options" /></GroupLabel>
          </Group>
          <Group $w={240}>
            <GroupBody>
              <TextTools>
                <ToolRow>
                  <Combos>
                    <Combo $w={63}><select aria-label="Font"><option>Calibri (Bo</option></select><Down c="#777" /></Combo>
                    <Combo $w={38}><select aria-label="Font size"><option>11</option></select><Down c="#777" /></Combo>
                  </Combos>
                  <Cluster>
                    <Tool $w={19} aria-label="Grow font"><Grow s={16} up /></Tool>
                    <Tool $w={19} aria-label="Shrink font"><Grow s={12} /></Tool>
                  </Cluster>
                  <Cluster>
                    <Tool $w={30} aria-label="Bullets"><Bullets /><Down /></Tool>
                    <Tool $w={29} aria-label="Numbering"><Bullets numbered /><Down /></Tool>
                  </Cluster>
                  <Cluster><Tool $w={19} aria-label="Clear formatting"><ClearFormat /></Tool></Cluster>
                </ToolRow>
                <ToolRow>
                  <Cluster>
                    <Tool $w={20} $serif aria-label="Bold">B</Tool>
                    <Tool $w={20} $serif aria-label="Italic"><em>I</em></Tool>
                    <Tool $w={20} $serif aria-label="Underline"><u>U</u></Tool>
                  </Cluster>
                  <Cluster>
                    <Tool $w={29} aria-label="Highlight"><Highlighter /><Down /></Tool>
                    <Tool $w={29} aria-label="Font color"><FontColour /><Down /></Tool>
                  </Cluster>
                  <Cluster>
                    <Tool $w={20} $on aria-label="Align left"><Align x={0} w={9} /></Tool>
                    <Tool $w={20} aria-label="Center"><Align x={2} w={9} /></Tool>
                    <Tool $w={20} aria-label="Align right"><Align x={4} w={9} /></Tool>
                  </Cluster>
                  <Cluster>
                    <Tool $w={19} aria-label="Decrease indent"><Indent out /></Tool>
                    <Tool $w={19} aria-label="Increase indent"><Indent /></Tool>
                  </Cluster>
                </ToolRow>
              </TextTools>
            </GroupBody>
            <GroupLabel><span>Basic Text</span><Launcher label="Font options" /></GroupLabel>
          </Group>
          <Group $w={86}>
            <GroupBody>
              <BigTool icon={<AddressBook />} lines={['Address', 'Book']} w={42} />
              <BigTool icon={<CheckNames />} lines={['Check', 'Names']} w={38} />
            </GroupBody>
            <GroupLabel><span>Names</span></GroupLabel>
          </Group>
          <Group $w={223}>
            <GroupBody>
              <BigTool icon={<Clip />} lines={['Attach', 'File']} w={38} />
              <BigTool icon={<AttachItem />} lines={['Attach', 'Item']} w={38} />
              <BigTool icon={<BusinessCard />} lines={['Business', 'Card']} w={45} inline />
              <BigTool icon={<CalendarIcon w={26} h={28} />} lines={['Calendar']} w={47} />
              <BigTool icon={<SignatureIcon />} lines={['Signature']} w={49} arrow />
            </GroupBody>
            <GroupLabel><span>Include</span><Launcher label="Include options" dim /></GroupLabel>
          </Group>
          <Group $w={81}>
            <GroupBody>
              <BigTool icon={<Flag />} lines={['Follow', 'Up']} w={44} inline />
              <OptionCol>
                <OptionBtn aria-label="Permission"><Permission /><Down /></OptionBtn>
                <OptionBtn aria-label="High importance"><High /></OptionBtn>
                <OptionBtn aria-label="Low importance"><Low /></OptionBtn>
              </OptionCol>
            </GroupBody>
            <GroupLabel><span>Options</span><Launcher label="Message options" /></GroupLabel>
          </Group>
          <Group $w={49}>
            <GroupBody>
              <BigTool icon={<SpellIcon />} lines={['Spelling']} w={46} arrow />
            </GroupBody>
            <GroupLabel><span>Proofing</span></GroupLabel>
          </Group>
        </Ribbon>
        <Form>
          <Recipient>To...</Recipient>
          <Field aria-label="To" />
          <Recipient>Cc...</Recipient>
          <Field aria-label="Cc" />
          <FormLabel htmlFor="subject">Subject:</FormLabel>
          <Field id="subject" />
        </Form>
        <Editor>
          <Page>
            <Headline>
              <a href="#talking">Talking Without Saying Anything</a>
              <PasteTag aria-label="Paste options"><PasteSmall /></PasteTag>
            </Headline>
          </Page>
          <EditorScroll>
            <RulerTag aria-label="View ruler"><Ruler /></RulerTag>
            <ScrollArrow aria-label="Scroll up"><ScrollTri up /></ScrollArrow>
            <Thumb>
              <svg width="7" height="7" viewBox="0 0 7 7"><path d="M0 1h7M0 3.500h7M0 6h7" stroke="#7b8390" /></svg>
            </Thumb>
            <ScrollArrow aria-label="Scroll down"><ScrollTri /></ScrollArrow>
          </EditorScroll>
        </Editor>
      </Client>
      <OfficeButton aria-label="Office"><OfficeLogo /></OfficeButton>
    </Win>
  );
}

export default function App() {
  return (
    <>
      <Global />
      <Desktop>
        <OutlookToday />
        <Taskbar>
          <Quick><ShowDesktop /><SwitchWin /><IE /></Quick>
          <Tasks>
            <Task><Firefox />Talking Without Say...</Task>
            <Task><OutlookLogo s={14} />Outlook Today - Mi...</Task>
            <Task $on><People />Untitled - Message (...</Task>
          </Tasks>
          <Tray>
            <svg width="14" height="8" viewBox="0 0 14 8"><path d="M7 1L3 4l4 3" stroke="#fff" fill="none" strokeWidth="1.500" /></svg>
            <OutlookLogo s={14} /><Antenna /><Shield /><span /><Battery /><Network /><Speaker />
            <time>11:33 PM</time>
          </Tray>
          <Orb aria-label="Start"><StartOrb /></Orb>
        </Taskbar>
        <MessageWindow />
      </Desktop>
    </>
  );
}
